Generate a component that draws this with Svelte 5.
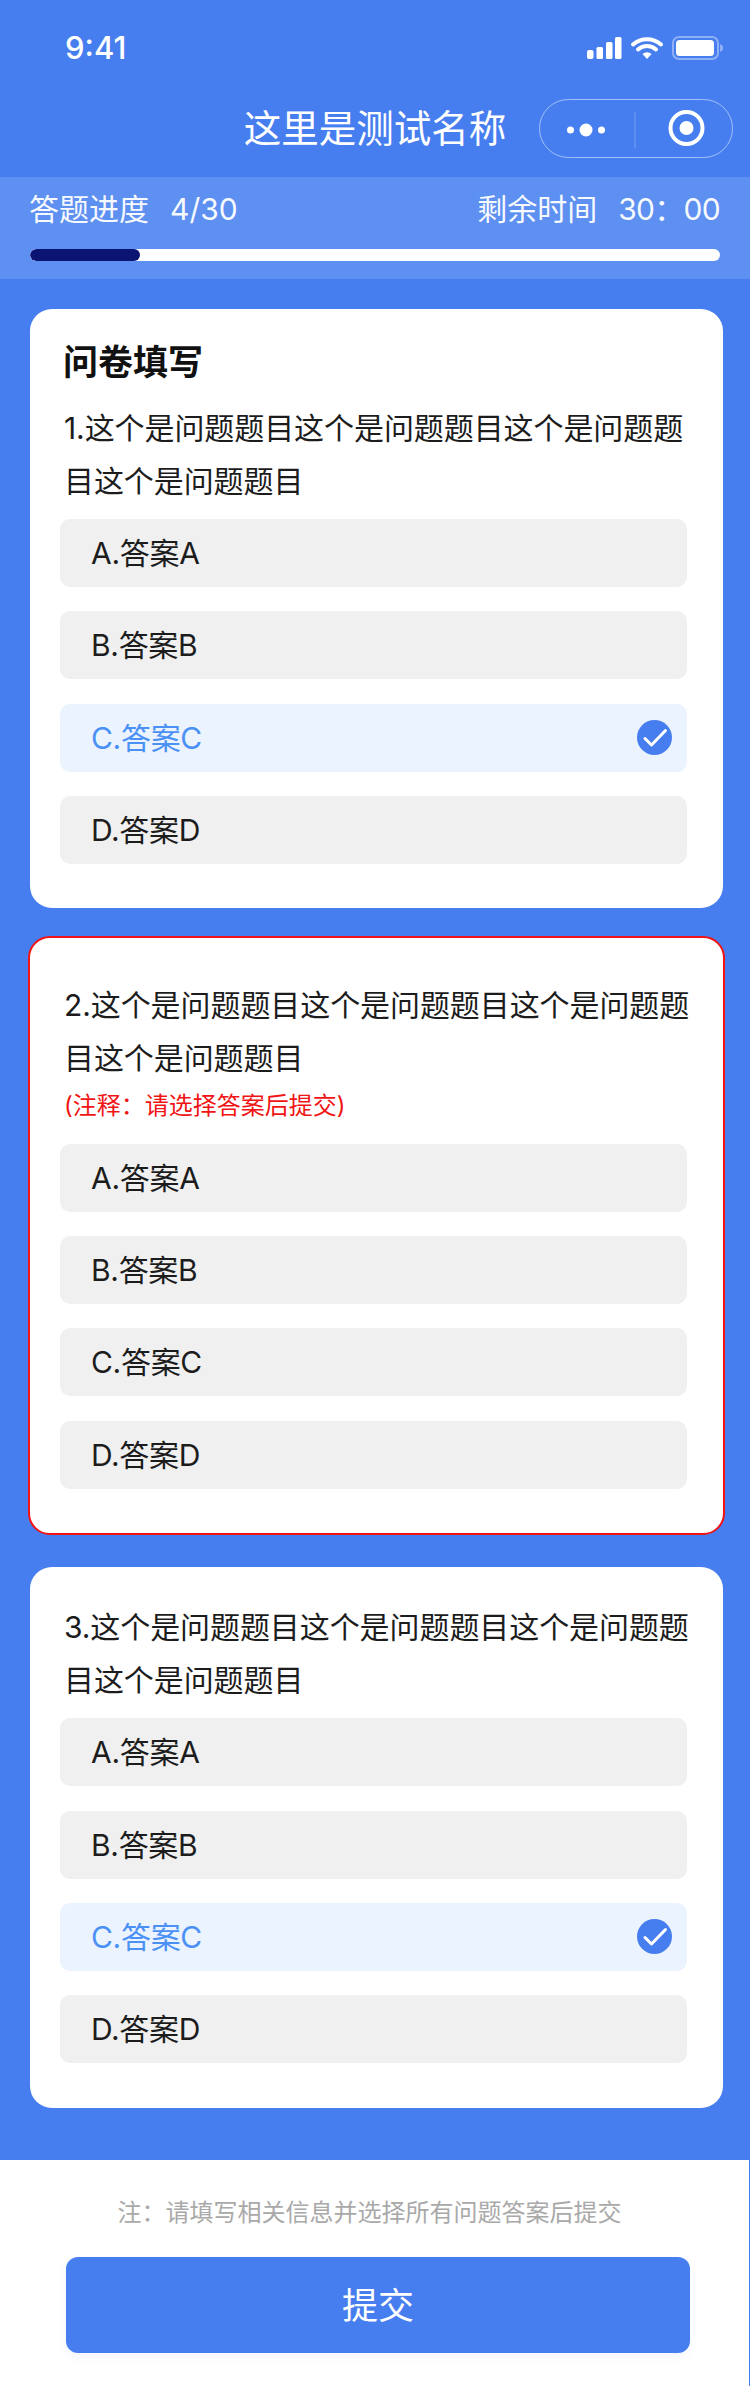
<script>
	const options = ['A', 'B', 'C', 'D'];
	const questionText = '这个是问题题目这个是问题题目这个是问题题目这个是问题题目';

	const questions = [
		{ id: 1, heading: '问卷填写', selected: 'C' },
		{ id: 2, invalid: true, note: '(注释\uFF1A请选择答案后提交)' },
		{ id: 3, selected: 'C' }
	];
</script>

<div class="page">
	<header class="top">
		<div class="status">
			<span class="clock">9:41</span>
			<svg class="status-icons" width="136" height="24" viewBox="0 0 136 24">
				<g fill="#fff">
					<rect x="0" y="14" width="6.5" height="9" rx="2" />
					<rect x="9.5" y="11" width="6.5" height="12" rx="1.5" />
					<rect x="19" y="6" width="6.5" height="17" rx="1.5" />
					<rect x="28" y="1" width="6.5" height="22" rx="1.5" />
				</g>
				<path d="M46 8.5a21 21 0 0 1 28 0" fill="none" stroke="#fff" stroke-width="4" stroke-linecap="round" />
				<path d="M51 13.5a13.500 13.500 0 0 1 18 0" fill="none" stroke="#fff" stroke-width="4" stroke-linecap="round" />
				<path d="M55.500 18a6.500 6.500 0 0 1 9 0l-4.500 5z" fill="#fff" />
				<rect x="86" y="1" width="45" height="22" rx="6" fill="none" stroke="#8eb0f5" stroke-width="2" />
				<rect x="89" y="4" width="38" height="16" rx="3.500" fill="#fff" />
				<path d="M133 8l3 2v4l-3 2z" fill="#8eb0f5" />
			</svg>
		</div>
		<div class="nav">
			<h1>这里是测试名称</h1>
			<svg class="capsule" width="194" height="59" viewBox="0 0 194 59">
				<rect x="0.500" y="0.500" width="193" height="58" rx="29" fill="none" stroke="#a3bff7" />
				<circle cx="31.500" cy="31" r="3.500" fill="#fff" />
				<circle cx="47" cy="31" r="6.500" fill="#fff" />
				<circle cx="62.500" cy="31" r="3.500" fill="#fff" />
				<line x1="96" y1="13" x2="96" y2="49" stroke="#fff" stroke-opacity="0.25" />
				<circle cx="147.500" cy="29" r="16" fill="none" stroke="#fff" stroke-width="4" />
				<circle cx="147.500" cy="29" r="7" fill="#fff" />
			</svg>
		</div>
	</header>

	<section class="progress">
		<div class="progress-text">
			<span>答题进度<b>4/30</b></span>
			<span>剩余时间<b class="time">30&#xFF1A;00</b></span>
		</div>
		<div class="track"><div class="fill"></div></div>
	</section>

	<main class="list">
		{#each questions as q (q.id)}
			<article class="card" class:invalid={q.invalid} class:titled={q.heading}>
				{#if q.heading}
					<h2>{q.heading}</h2>
				{/if}
				<p class="question">{q.id}.{questionText}</p>
				{#if q.note}
					<p class="note">{q.note}</p>
				{/if}
				<ul class="options">
					{#each options as opt}
						<li class="option" class:selected={q.selected === opt}>
							<span class="label">{opt}.答案{opt}</span>
							{#if q.selected === opt}
								<svg width="35" height="35" viewBox="0 0 35 35">
									<circle cx="17.500" cy="17.500" r="17.500" fill="#477eef" />
									<path d="M8 18.500l6.500 6.500 14-14.500" fill="none" stroke="#fff" stroke-width="3" stroke-linecap="round" stroke-linejoin="round" />
								</svg>
							{/if}
						</li>
					{/each}
				</ul>
			</article>
		{/each}
	</main>

	<footer class="foot">
		<p>注&#xFF1A;请填写相关信息并选择所有问题答案后提交</p>
		<button type="button">提交</button>
	</footer>
</div>

<style>
	:global(body) {
		margin: 0;
		background: #fff;
	}

	.page {
		width: 750px;
		height: 2386px;
		display: flex;
		flex-direction: column;
		background: #477eef;
		font-family: 'Inter', 'Noto Sans CJK SC', sans-serif;
		color: #1c1c1c;
	}

	.top {
		height: 177px;
		color: #fff;
	}

	.status {
		height: 99px;
		box-sizing: border-box;
		padding: 36px 27px 0 65px;
		display: flex;
		justify-content: space-between;
		align-items: flex-start;
	}

	.clock {
		font-size: 31px;
		font-weight: 500;
		line-height: 24px;
	}

	.nav {
		display: grid;
		grid-template-columns: 1fr auto 1fr;
		align-items: center;
	}

	.nav h1 {
		grid-column: 2;
		margin: 0;
		font-size: 37.500px;
		font-weight: 400;
		line-height: 59px;
	}

	.capsule {
		justify-self: end;
		margin-right: 17px;
	}

	.progress {
		height: 102px;
		box-sizing: border-box;
		padding: 14px 30px 0;
		background: #5e90f1;
		color: #fff;
	}

	.progress-text {
		display: flex;
		justify-content: space-between;
		margin-left: -1px;
		font-size: 30px;
		line-height: 36px;
		opacity: 0.95;
	}

	.progress-text b {
		margin-left: 21px;
		font-weight: 400;
	}

	.progress-text .time {
		letter-spacing: -0.7px;
	}

	.track {
		height: 12px;
		margin-top: 22px;
		border-radius: 6px;
		background: #fff;
		overflow: hidden;
	}

	.fill {
		width: 110px;
		height: 100%;
		border-radius: 6px;
		background: #0b1472;
	}

	.list {
		flex: 1;
		display: flex;
		flex-direction: column;
		gap: 30px;
		padding: 30px 27px 0 30px;
	}

	.card {
		background: #fff;
		border-radius: 22px;
		padding: 33.500px 36px 44.500px 30px;
	}

	.card.titled {
		padding-top: 32px;
	}

	.card.invalid {
		margin: -2px -2px 2px;
		padding-top: 40.500px;
		border: 2px solid #f01414;
	}

	h2 {
		margin: 0 0 18.500px 3px;
		font-size: 35px;
		font-weight: 700;
		line-height: 42px;
		color: #111;
	}

	.question {
		width: 640px;
		margin: 0 0 11.500px 4px;
		font-size: 30px;
		line-height: 53px;
		letter-spacing: -0.08px;
	}

	.note {
		margin: -7px 0 20.500px 4px;
		font-size: 24px;
		line-height: 34px;
		color: #f01414;
	}

	.options {
		list-style: none;
		margin: 0;
		padding: 0;
		display: flex;
		flex-direction: column;
		gap: 24.300px;
	}

	.option {
		height: 68px;
		box-sizing: border-box;
		padding: 0 15px 0 31px;
		display: flex;
		align-items: center;
		justify-content: space-between;
		border-radius: 10px;
		background: #f0f0f0;
		font-size: 30px;
	}

	.label {
		margin-top: -4px;
		letter-spacing: -0.3px;
	}

	.option.selected {
		background: #eaf3fe;
		color: #4a90f5;
	}

	.foot {
		height: 226px;
		box-sizing: border-box;
		padding-top: 37px;
		background: #fff;
		border-right: 1px solid #477eef;
		text-align: center;
	}

	.foot p {
		margin: 0;
		padding-right: 10px;
		font-size: 24px;
		line-height: 32px;
		color: #a9a9a9;
	}

	.foot button {
		display: block;
		width: 624px;
		height: 96px;
		margin: 28px 0 0 66px;
		padding: 0 0 4px;
		border: 0;
		border-radius: 12px;
		background: #477eef;
		color: #fff;
		font: inherit;
		font-size: 36px;
		box-shadow: 0 4px 10px rgba(71, 126, 239, 0.06);
	}
</style>
